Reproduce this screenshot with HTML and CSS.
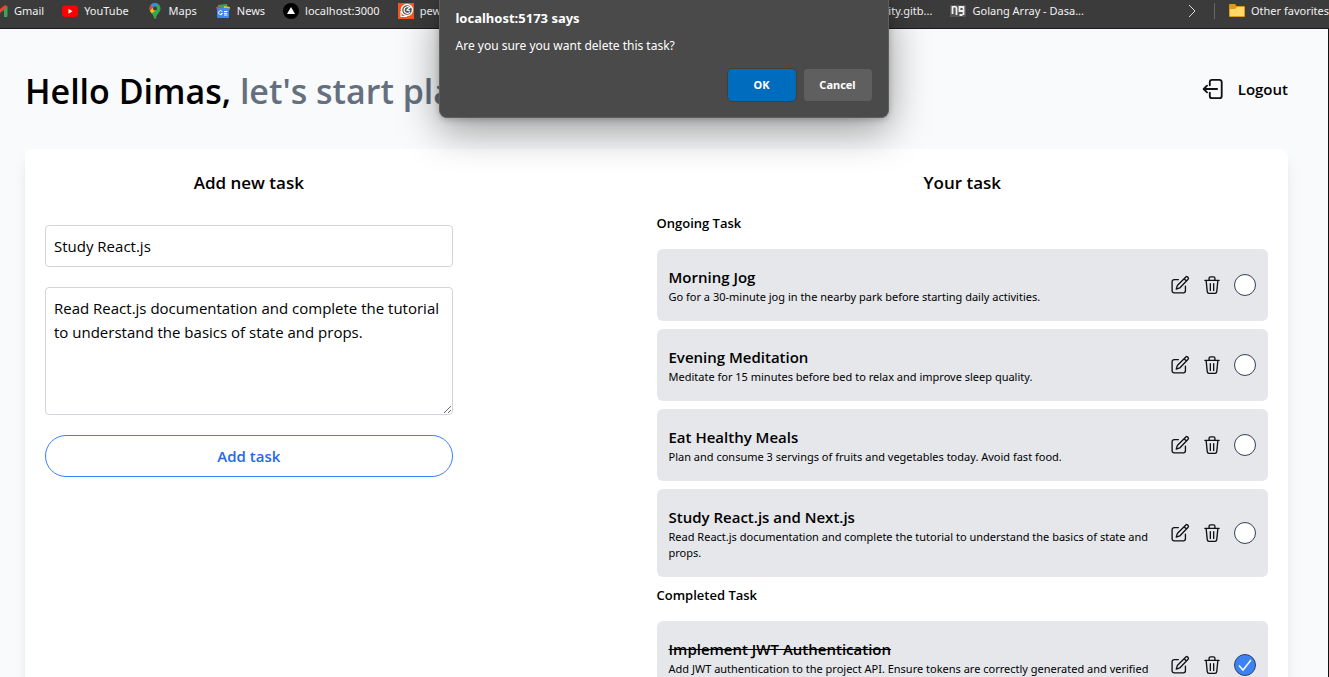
FILE: index.html
```html
<!DOCTYPE html>
<html lang="en">
<head>
<meta charset="utf-8">
<title>Task planner</title>
<link rel="stylesheet" href="styles.css">
</head>
<body>
<svg class="sprite" aria-hidden="true">
  <symbol id="edit" viewBox="0 0 24 24"><path d="M10 5.500H5A2.500 2.500 0 0 0 2.500 8v11A2.500 2.500 0 0 0 5 21.500h11a2.500 2.500 0 0 0 2.500-2.500v-5.500M7.500 17l1.300-4.300L19 2.300a1.500 1.500 0 0 1 2.100 0l.6.6a1.500 1.500 0 0 1 0 2.100L11.700 15.500zM17 4.500l2.700 2.700"/></symbol>
  <symbol id="trash" viewBox="0 0 24 24"><path d="M3.500 6.500h17M8.500 6V4A1.700 1.700 0 0 1 10.200 2.300h3.600A1.700 1.700 0 0 1 15.500 4V6M5 7l1.300 13a2.200 2.200 0 0 0 2.200 2h7a2.200 2.200 0 0 0 2.200-2L19 7M10 10.500v8M14 10.500v8"/></symbol>
</svg>
<div class="window">
  <nav class="bookmarks" aria-label="Bookmarks">
    <div class="bookmarks-start">
      <a class="bookmark" href="#"><svg viewBox="0 0 16 16"><path d="M1 3v11h3V7l4 3 4-3v7h3V3l-2-1-5 4-5-4z" fill="#ea4335"/><path d="M12 7v7h2.500q1 0 1-1V3z" fill="#34a853"/></svg>Gmail</a>
      <a class="bookmark" href="#"><svg viewBox="0 0 16 16"><rect y="2.500" width="16" height="11.500" rx="3" fill="#f00"/><path d="M6.500 5.700v5l4-2.500z" fill="#fff"/></svg>YouTube</a>
      <a class="bookmark" href="#"><svg viewBox="0 0 16 16"><path d="M8 0a5.500 5.500 0 0 0-5.500 5.500c0 4 4 5.500 4.500 9.500q1 2 2 0c.5-4 4.500-5.500 4.500-9.500A5.500 5.500 0 0 0 8 0" fill="#34a853"/><path d="M8 0a5.500 5.500 0 0 0-4.300 2L6 4.500 11 1A5 5 0 0 0 8 0" fill="#4285f4"/><path d="M3.700 2A5.500 5.500 0 0 0 3 7.700L6.300 4.200z" fill="#ea4335"/><path d="M3 7.700q.5 1.300 1.700 2.600L9.500 7 6.300 4.200z" fill="#fbbc04"/><circle cx="8" cy="5.500" r="2" fill="#3c3c3c"/></svg>Maps</a>
      <a class="bookmark" href="#"><svg viewBox="0 0 16 16"><path d="M3 2l9-1 1 5H3z" fill="#34a853"/><path d="M1 4l5-1 1 4H2z" fill="#ea4335"/><path d="M9 3l6 1-1 4H9z" fill="#fbbc04"/><rect x="2" y="5" width="12" height="10" rx="1" fill="#4285f4"/><path d="M7.300 8.500a2 2 0 1 0 .2 2H6M9 8.500h3.500M9 10.300h3M9 12h3.500" fill="none" stroke="#fff"/></svg>News</a>
      <a class="bookmark" href="#"><svg viewBox="0 0 16 16"><circle cx="8" cy="8" r="8" fill="#000"/><path d="M8 4l4 7H4z" fill="#fff"/></svg>localhost:3000</a>
      <a class="bookmark" href="#"><svg viewBox="0 0 16 16"><path d="M0 0h16v16H0z" fill="#f0581f"/><circle cx="9" cy="7" r="5.500" fill="#555" stroke="#fff" stroke-width="1.400"/><path d="M3 8v5.500h6M11.500 4.500a3.300 3.300 0 1 0 .5 4.500M13 3.500L9 7l3 1" fill="none" stroke="#fff" stroke-width="1.200"/></svg>pew</a>
    </div>
    <div class="bookmarks-end">
      <a class="bookmark" href="#">ity.gitb...</a>
      <a class="bookmark" href="#"><svg viewBox="0 0 16 16"><path d="M0 2h16v12H0z" fill="#555"/><path d="M2.500 3v8M2.500 4q4-1 4 1v6M6.500 12V7M13.500 12V4h-4v4h4M9.500 12h3" fill="none" stroke="#eee" stroke-width="1.800"/></svg>Golang Array - Dasa...</a>
    </div>
    <div class="bookmarks-more">
      <button class="more" type="button" aria-label="More bookmarks"><svg viewBox="0 0 8 14"><path d="M1 1l6 6-6 6"/></svg></button>
      <span class="divider"></span>
      <a class="bookmark" href="#"><svg viewBox="0 0 16 16"><path d="M0 2q0-1 1-1h5l1.500 2H15q1 0 1 1v9q0 1-1 1H1q-1 0-1-1z" fill="#d99a16"/><path d="M1 6h5l2-2h7v9H1z" fill="#ffd869"/></svg>Other favorites</a>
    </div>
  </nav>

  <main class="page">
    <header class="header">
      <h1 class="greeting">Hello Dimas, <span class="muted">let's start planning</span></h1>
      <button class="logout" type="button"><svg viewBox="0 0 24 24"><path d="M8.500 8V4.500A2.500 2.500 0 0 1 11 2h8a2.500 2.500 0 0 1 2.500 2.500v15A2.500 2.500 0 0 1 19 22h-8a2.500 2.500 0 0 1-2.500-2.500V16M16.500 12H2M5.500 8.300L1.800 12l3.700 3.700"/></svg>Logout</button>
    </header>
    <div class="card">
      <form class="new-task">
        <h2 class="title">Add new task</h2>
        <input class="field" type="text" aria-label="Task title" value="Study React.js">
        <textarea class="field area" aria-label="Task description">Read React.js documentation and complete the tutorial to understand the basics of state and props.</textarea>
        <button class="add" type="button">Add task</button>
      </form>
      <section class="tasks">
        <h2 class="title">Your task</h2>
        <h3 class="group">Ongoing Task</h3>
        <ul class="list">
          <li class="task">
            <div class="text"><h4 class="name">Morning Jog</h4><p class="desc">Go for a 30-minute jog in the nearby park before starting daily activities.</p></div>
            <button class="icon" type="button" aria-label="Edit"><svg><use href="#edit"/></svg></button>
            <button class="icon" type="button" aria-label="Delete"><svg><use href="#trash"/></svg></button>
            <input class="check" type="checkbox" aria-label="Morning Jog done">
          </li>
          <li class="task">
            <div class="text"><h4 class="name">Evening Meditation</h4><p class="desc">Meditate for 15 minutes before bed to relax and improve sleep quality.</p></div>
            <button class="icon" type="button" aria-label="Edit"><svg><use href="#edit"/></svg></button>
            <button class="icon" type="button" aria-label="Delete"><svg><use href="#trash"/></svg></button>
            <input class="check" type="checkbox" aria-label="Evening Meditation done">
          </li>
          <li class="task">
            <div class="text"><h4 class="name">Eat Healthy Meals</h4><p class="desc">Plan and consume 3 servings of fruits and vegetables today. Avoid fast food.</p></div>
            <button class="icon" type="button" aria-label="Edit"><svg><use href="#edit"/></svg></button>
            <button class="icon" type="button" aria-label="Delete"><svg><use href="#trash"/></svg></button>
            <input class="check" type="checkbox" aria-label="Eat Healthy Meals done">
          </li>
          <li class="task">
            <div class="text"><h4 class="name">Study React.js and Next.js</h4><p class="desc">Read React.js documentation and complete the tutorial to understand the basics of state and props.</p></div>
            <button class="icon" type="button" aria-label="Edit"><svg><use href="#edit"/></svg></button>
            <button class="icon" type="button" aria-label="Delete"><svg><use href="#trash"/></svg></button>
            <input class="check" type="checkbox" aria-label="Study React.js and Next.js done">
          </li>
        </ul>
        <h3 class="group">Completed Task</h3>
        <ul class="list">
          <li class="task done">
            <div class="text"><h4 class="name">Implement JWT Authentication</h4><p class="desc">Add JWT authentication to the project API. Ensure tokens are correctly generated and verified</p></div>
            <button class="icon" type="button" aria-label="Edit"><svg><use href="#edit"/></svg></button>
            <button class="icon" type="button" aria-label="Delete"><svg><use href="#trash"/></svg></button>
            <span class="checkwrap"><input class="check" type="checkbox" checked aria-label="Implement JWT Authentication done"><svg class="tick" viewBox="0 0 22 22"><path d="M5 11.500l4 4.500 8-10"/></svg></span>
          </li>
        </ul>
      </section>
    </div>
  </main>

  <div class="dialog" role="alertdialog" aria-labelledby="dialog-title" aria-describedby="dialog-text">
    <h2 class="dialog-title" id="dialog-title">localhost:5173 says</h2>
    <p class="dialog-text" id="dialog-text">Are you sure you want delete this task?</p>
    <div class="actions">
      <button class="action primary" type="button">OK</button>
      <button class="action" type="button">Cancel</button>
    </div>
  </div>
</div>
</body>
</html>
```

FILE: styles.css
```css
* { box-sizing: border-box; margin: 0; }
body { font-family: "Open Sans", "Noto Sans", sans-serif; font-size: 15px; line-height: 24px; color: #000; }
button, input, textarea { font: inherit; color: inherit; }
button { background: none; border: 0; padding: 0; cursor: pointer; }
.sprite { display: none; }

.window { position: relative; height: 100vh; overflow: hidden; display: flex; flex-direction: column; background: #f9fafb; }

.bookmarks { flex: none; display: flex; align-items: flex-start; height: 29px; padding-top: 3px; background: #3b3b3b; border-bottom: 1px solid #1c1a1c; overflow: hidden; }
.bookmarks-start, .bookmarks-end, .bookmarks-more { display: flex; align-items: center; gap: 18px; flex: none; }
.bookmarks-start { margin-left: -8px; }
.bookmarks-end { margin-left: auto; }
.bookmarks-more { margin-left: 104px; }
.bookmark { display: flex; align-items: center; gap: 6px; font-family: "Noto Sans", sans-serif; font-size: 11px; line-height: 16px; color: #f2f2f2; text-decoration: none; white-space: nowrap; }
.bookmark svg { width: 16px; height: 16px; }
.more { display: flex; }
.more svg { width: 8px; height: 14px; fill: none; stroke: #ddd; }
.divider { width: 1px; height: 16px; background: #666; }
.divider + .bookmark { margin-left: -4px; }

.page { flex: 1; min-height: 0; padding: 32px 40px 0 25px; border-right: 1px solid #111; }
.header { display: flex; justify-content: space-between; align-items: center; height: 60px; margin-bottom: 28px; }
.greeting { font-size: 34px; line-height: 40px; font-weight: 600; white-space: nowrap; }
.muted { color: #64707f; }
.logout { display: flex; align-items: center; gap: 14px; padding-bottom: 4px; font-weight: 600; }
.logout svg { width: 22px; height: 22px; fill: none; stroke: #111; stroke-width: 2; stroke-linecap: round; stroke-linejoin: round; }

.card { display: flex; justify-content: space-between; align-items: flex-start; min-height: 100%; padding: 20px; background: #fff; border-radius: 8px; box-shadow: 0 10px 15px -3px rgba(0, 0, 0, .1), 0 4px 6px -4px rgba(0, 0, 0, .1); }
.new-task { width: 33.333%; display: flex; flex-direction: column; gap: 20px; }
.tasks { width: 50%; }
.title { font-size: 17px; line-height: 28px; font-weight: 600; text-align: center; }
.new-task .title { margin-bottom: 8px; }
.field { display: block; width: 100%; padding: 8px; background: #fff; border: 1px solid #d1d5db; border-radius: 4px; }
.area { height: 128px; resize: vertical; }
.add { height: 42px; border: 1px solid #3b82f6; border-radius: 21px; color: #2468ee; font-weight: 600; }

.group { margin: 16px 0; font-size: 13px; line-height: 20px; font-weight: 600; }
.list { display: flex; flex-direction: column; gap: 8px; padding: 0; list-style: none; }
.list + .group { margin-top: 8px; }
.task { display: flex; align-items: center; gap: 12px; padding: 16px 12px; background: #e5e7eb; border-radius: 6px; }
.text { flex: 1; min-width: 0; }
.name { font-size: 15px; line-height: 24px; font-weight: 600; }
.desc { font-family: "Noto Sans", sans-serif; font-size: 11px; line-height: 16px; }
.done { min-height: 88px; }
.done .text { align-self: flex-start; }
.done .name { text-decoration: line-through; }
.icon { display: flex; }
.icon svg { width: 20px; height: 20px; fill: none; stroke: #111; stroke-width: 1.6; stroke-linecap: round; stroke-linejoin: round; }
.check { appearance: none; display: block; width: 22px; height: 22px; background: #fff; border: 1px solid #334155; border-radius: 50%; }
.check:checked { background: #3b82f6; }
.checkwrap { position: relative; }
.tick { position: absolute; inset: 0; width: 22px; height: 22px; fill: none; stroke: #fff; stroke-width: 1.5; pointer-events: none; }

.dialog { position: absolute; inset: 0 2px auto 0; width: 450px; margin: 0 auto; padding: 8px 16px 16px; background: #4a4a4a; border: 1px solid #5e5e5e; border-top: 0; border-radius: 0 0 8px 8px; color: #fff; font-family: "Noto Sans", sans-serif; box-shadow: 0 12px 40px rgba(0, 0, 0, .4), 0 2px 6px rgba(0, 0, 0, .2); }
.dialog-title { font-size: 13px; line-height: 20px; font-weight: 700; }
.dialog-text { margin: 8px 0 13px; font-size: 12px; line-height: 20px; }
.actions { display: flex; justify-content: flex-end; gap: 8px; }
.action { width: 68px; height: 32px; border-radius: 4px; background: #5f5f5f; font-size: 11px; font-weight: 700; }
.primary { background: #006cbe; outline: 1px solid #463f2c; }
```
